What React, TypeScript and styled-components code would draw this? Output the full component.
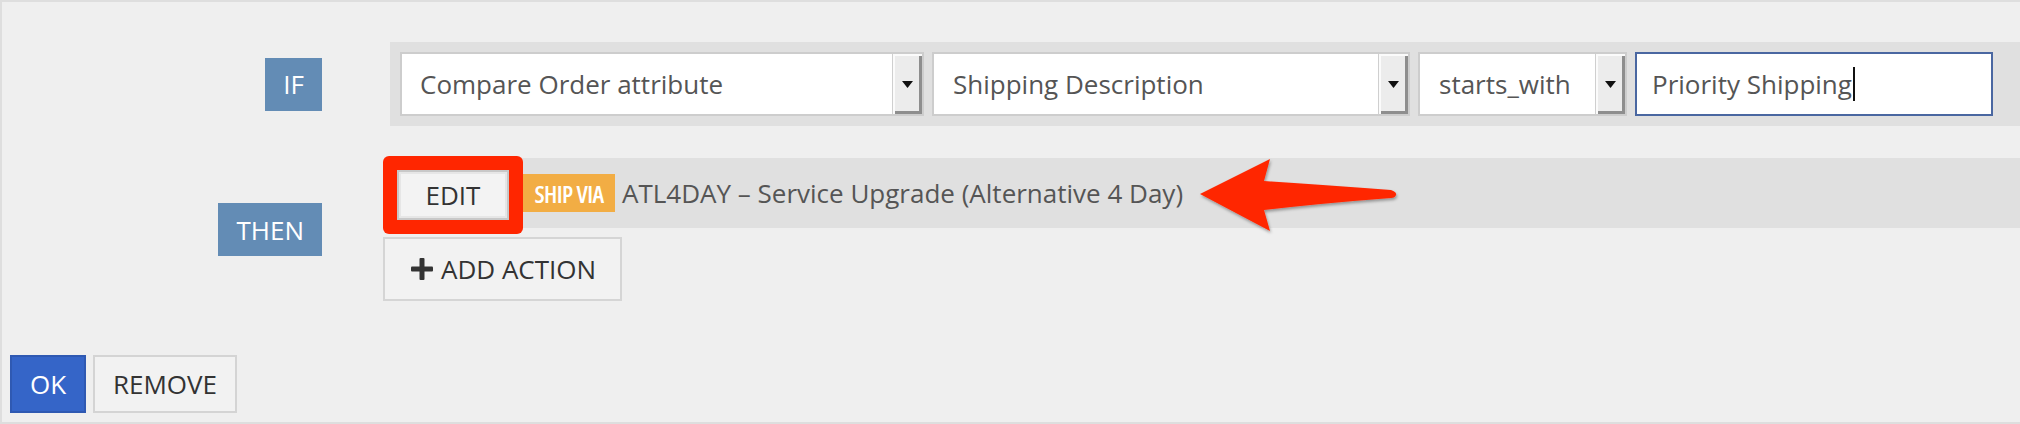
import React from "react";
import styled, { createGlobalStyle } from "styled-components";

const Global = createGlobalStyle`
  html, body { margin: 0; padding: 0; background: #efefef; }
  body { font-family: "Open Sans", "Liberation Sans", Arial, sans-serif; }
  * { box-sizing: border-box; }
`;

const Frame = styled.div`
  position: relative;
  width: 2020px;
  height: 424px;
  overflow: hidden;
  background: #efefef;
  border-top: 2px solid #dedede;
  border-left: 2px solid #dedede;
  border-bottom: 2px solid #dedede;
  padding-top: 40px;
  font-size: 26px;
  color: #555;
`;

const RuleGrid = styled.div`
  display: grid;
  grid-template-columns: 320px 1fr;
  column-gap: 61px;
  row-gap: 32px;
  align-items: center;
`;

const LabelCell = styled.div`
  display: flex;
  justify-content: flex-end;
`;

const Tag = styled.div`
  height: 53px;
  padding: 0 18px;
  display: flex;
  align-items: center;
  background: #638cb5;
  color: #fff;
  font-size: 26px;
`;

const ConditionBar = styled.div`
  margin-left: 7px;
  height: 84px;
  padding: 10px;
  background: #e0e0e0;
  display: flex;
  gap: 8px;
`;

const Select = styled.div<{ $w: number }>`
  width: ${(p) => p.$w}px;
  height: 64px;
  display: flex;
  background: #fff;
  border: 2px solid #cdcdcd;
`;

const SelectValue = styled.div<{ $pad: number }>`
  flex: 1;
  display: flex;
  align-items: center;
  padding-left: ${(p) => p.$pad}px;
  color: #555;
  white-space: nowrap;
`;

const SelectButton = styled.div`
  width: 30px;
  display: flex;
  align-items: center;
  justify-content: center;
  background: #ececec;
  border-left: 1px solid #cfcfcf;
  box-shadow: inset 2px 2px 0 #fbfbfb, inset -3px -3px 0 #8e8e8e;
`;

const TextBox = styled.div`
  width: 358px;
  height: 64px;
  display: flex;
  align-items: center;
  padding-left: 15px;
  background: #fff;
  border: 2px solid #4a67a1;
  color: #555;
  white-space: nowrap;
`;

const Caret = styled.span`
  display: inline-block;
  width: 2px;
  height: 34px;
  margin-left: 1px;
  background: #111;
`;

const ActionsCol = styled.div`
  display: flex;
  flex-direction: column;
  align-items: flex-start;
  gap: 9px;
`;

const ActionRow = styled.div`
  position: relative;
  align-self: stretch;
  margin-left: 3px;
  height: 70px;
  padding-left: 11px;
  background: #e0e0e0;
  display: flex;
  align-items: center;
`;

const EditWrap = styled.div`
  position: relative;
  margin-top: 4px;
  margin-right: 14px;
  &::before {
    content: "";
    position: absolute;
    inset: -14px;
    border-radius: 6px;
    background: #ff2600;
  }
`;

const EditButton = styled.div`
  position: relative;
  width: 112px;
  height: 50px;
  display: flex;
  align-items: center;
  justify-content: center;
  background: #f3f3f3;
  border: 2px solid #c8c8c8;
  box-shadow: inset 0 0 0 2px #e6e6e6;
  color: #333;
  font-size: 26px;
`;

const Badge = styled.div`
  width: 92px;
  height: 38px;
  display: flex;
  align-items: center;
  justify-content: center;
  background: #f2ad44;
  color: #fff;
  font-size: 24px;
  font-weight: 600;
  font-stretch: 85%;
  letter-spacing: -0.6px;
  white-space: nowrap;
`;

const ActionText = styled.div`
  margin-left: 7px;
  color: #555;
  white-space: nowrap;
`;

const ArrowOverlay = styled.svg`
  position: absolute;
  left: 809px;
  top: -3px;
  overflow: visible;
`;

const AddButton = styled.div`
  width: 239px;
  height: 64px;
  display: flex;
  align-items: center;
  gap: 8px;
  padding-left: 26px;
  background: #f2f2f2;
  border: 2px solid #d5d5d5;
  color: #333;
  white-space: nowrap;
`;

const Footer = styled.div`
  display: flex;
  gap: 7px;
  margin-top: 54px;
  padding-left: 8px;
`;

const FooterButton = styled.div<{ $primary?: boolean; $w: number }>`
  width: ${(p) => p.$w}px;
  height: 58px;
  display: flex;
  align-items: center;
  justify-content: center;
  background: ${(p) => (p.$primary ? "#3565c8" : "#f2f2f2")};
  border: 2px solid ${(p) => (p.$primary ? "#2f59b2" : "#d4d4d4")};
  color: ${(p) => (p.$primary ? "#fff" : "#333")};
  font-size: 26px;
`;

const DropArrow = () => (
  <svg width="11" height="7" viewBox="0 0 11 7">
    <polygon points="0,0 11,0 5.5,7" fill="#111" />
  </svg>
);

const PlusIcon = () => (
  <svg width="22" height="22" viewBox="0 0 22 22">
    <rect x="8.5" y="0" width="5" height="22" rx="1" fill="#333" />
    <rect x="0" y="8.5" width="22" height="5" rx="1" fill="#333" />
  </svg>
);

const RedArrow = () => (
  <ArrowOverlay width="210" height="85" viewBox="0 0 210 85">
    <defs>
      <filter id="arrowShadow" x="-20%" y="-30%" width="140%" height="160%">
        <feDropShadow dx="1" dy="2" stdDeviation="1.6" floodColor="#000" floodOpacity="0.35" />
      </filter>
    </defs>
    <path
      d="M5 39 L75 4 L69 26 Q130 30 196 35 Q202 37 201 40 Q200 43 196 43 Q130 48 69 55 L75 76 Z"
      fill="#ff2600"
      filter="url(#arrowShadow)"
    />
  </ArrowOverlay>
);

type SelectDef = { value: string; width: number; pad: number };

const selects: SelectDef[] = [
  { value: "Compare Order attribute", width: 524, pad: 18 },
  { value: "Shipping Description", width: 478, pad: 19 },
  { value: "starts_with", width: 209, pad: 19 },
];

export default function App() {
  return (
    <>
      <Global />
      <Frame>
        <RuleGrid>
          <LabelCell>
            <Tag>IF</Tag>
          </LabelCell>
          <ConditionBar>
            {selects.map((s) => (
              <Select key={s.value} $w={s.width}>
                <SelectValue $pad={s.pad}>{s.value}</SelectValue>
                <SelectButton>
                  <DropArrow />
                </SelectButton>
              </Select>
            ))}
            <TextBox>
              Priority Shipping
              <Caret />
            </TextBox>
          </ConditionBar>

          <LabelCell>
            <Tag>THEN</Tag>
          </LabelCell>
          <ActionsCol>
            <ActionRow>
              <EditWrap>
                <EditButton>EDIT</EditButton>
              </EditWrap>
              <Badge>SHIP VIA</Badge>
              <ActionText>ATL4DAY – Service Upgrade (Alternative 4 Day)</ActionText>
              <RedArrow />
            </ActionRow>
            <AddButton>
              <PlusIcon />
              ADD ACTION
            </AddButton>
          </ActionsCol>
        </RuleGrid>
        <Footer>
          <FooterButton $primary $w={76}>OK</FooterButton>
          <FooterButton $w={144}>REMOVE</FooterButton>
        </Footer>
      </Frame>
    </>
  );
}
